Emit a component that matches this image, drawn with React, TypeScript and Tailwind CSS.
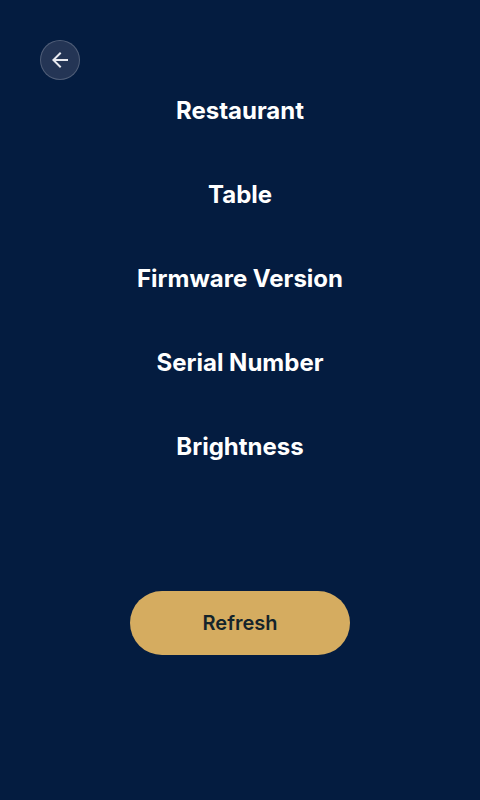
const labels = ["Restaurant", "Table", "Firmware Version", "Serial Number", "Brightness"];

function BackButton() {
  return (
    <button
      aria-label="Back"
      className="flex size-10 items-center justify-center rounded-full border border-white/20 bg-[#243555]"
    >
      <svg viewBox="0 0 24 24" className="size-6" fill="#e8eaf0">
        <path d="M20 11H7.83l5.59-5.59L12 4l-8 8 8 8 1.41-1.41L7.83 13H20v-2z" />
      </svg>
    </button>
  );
}

export default function App() {
  return (
    <main className="flex h-[800px] w-[480px] flex-col bg-[#041c40] pt-10 font-['Inter',sans-serif]">
      <div className="flex px-10">
        <BackButton />
      </div>
      <ul className="mt-4 flex flex-col items-center gap-[54px]">
        {labels.map((label) => (
          <li key={label} className="text-2xl leading-[30px] font-bold text-white">
            {label}
          </li>
        ))}
      </ul>
      <button className="mt-[129px] h-16 w-[220px] self-center rounded-full bg-[#d5ac60] text-xl font-semibold text-[#14242b]">
        Refresh
      </button>
    </main>
  );
}
